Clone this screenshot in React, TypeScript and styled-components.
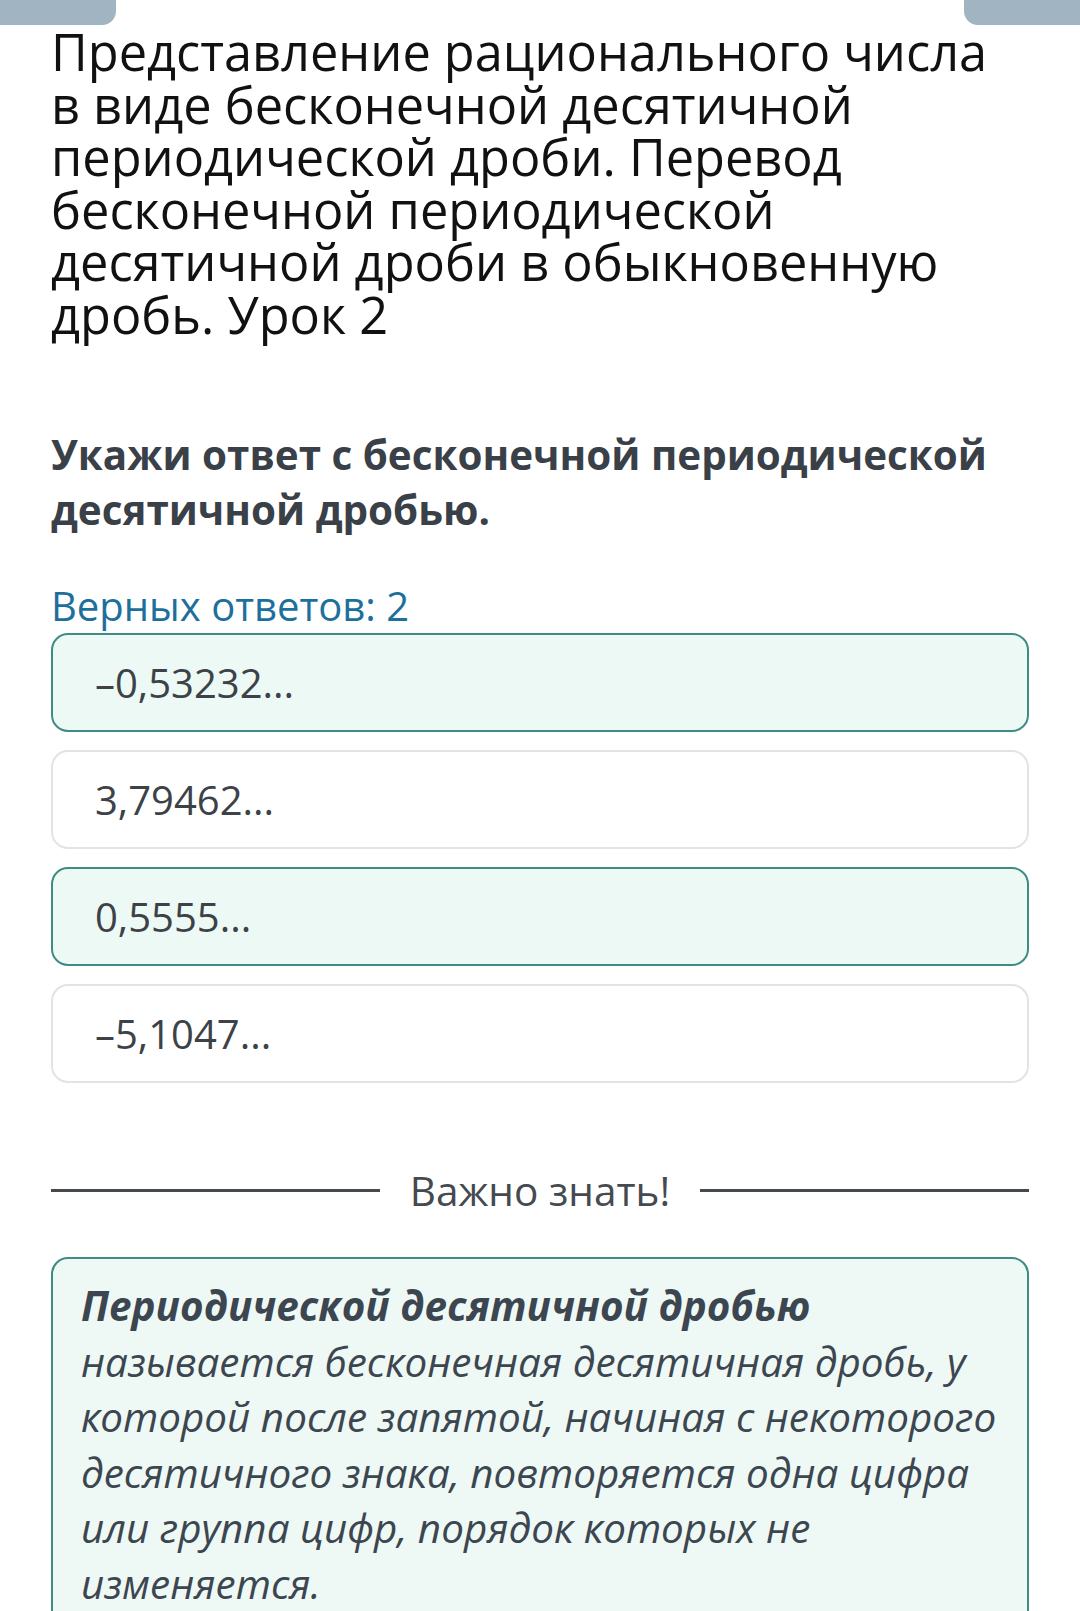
import styled, { createGlobalStyle } from "styled-components";

const GlobalStyle = createGlobalStyle`
  body {
    margin: 0;
    background: #ffffff;
    font-family: "Open Sans", "Noto Sans", sans-serif;
  }
`;

const Page = styled.div`
  width: 1080px;
  height: 1611px;
  overflow: hidden;
  box-sizing: border-box;
`;

const TopBar = styled.div`
  display: flex;
  justify-content: space-between;
  height: 25px;
`;

const Tab = styled.div<{ side: string }>`
  width: 116px;
  height: 25px;
  background: #a0b4c2;
  border-radius: ${(props) =>
    props.side == "left" ? "0 0 14px 0" : "0 0 0 14px"};
`;

const Content = styled.div`
  padding: 0 51px;
`;

const Title = styled.h1`
  margin: 1px 0 0;
  max-width: 960px;
  font-size: 50.5px;
  font-weight: 400;
  line-height: 52.5px;
  color: #111111;
`;

const Question = styled.h2`
  margin: 86px 0 0;
  font-size: 40.4px;
  font-weight: 700;
  line-height: 55px;
  color: #3a4048;
`;

const Hint = styled.div`
  margin-top: 46px;
  font-size: 40px;
  line-height: 46px;
  color: #1d6f9c;
`;

const Options = styled.div`
  display: flex;
  flex-direction: column;
  gap: 18px;
  margin-top: 4px;
`;

const Option = styled.div<{ selected: boolean }>`
  box-sizing: border-box;
  height: 99px;
  display: flex;
  align-items: center;
  padding-left: 42px;
  border-radius: 17px;
  border: 2px solid ${(props) => (props.selected ? "#3d8c85" : "#e3e3e3")};
  background: ${(props) => (props.selected ? "#edf9f4" : "#ffffff")};
  font-size: 40px;
  color: #3c4248;
`;

const Divider = styled.div`
  display: flex;
  align-items: center;
  gap: 30px;
  margin-top: 80px;
  font-size: 40.5px;
  color: #444a50;

  &::before,
  &::after {
    content: "";
    flex: 1;
    height: 3px;
    background: #454a4f;
  }
`;

const InfoBox = styled.div`
  margin-top: 39px;
  box-sizing: border-box;
  min-height: 400px;
  padding: 19px 28px 40px;
  border: 2px solid #3d8c85;
  border-radius: 17px;
  background: #eef8f4;
  font-size: 40.4px;
  line-height: 55.5px;
  font-style: italic;
  color: #3c4650;
`;

const Term = styled.b`
  font-weight: 700;
`;

const answers = [
  { text: "–0,53232...", selected: true },
  { text: "3,79462...", selected: false },
  { text: "0,5555...", selected: true },
  { text: "–5,1047...", selected: false },
];

const App = () => {
  return (
    <>
      <GlobalStyle />
      <Page>
        <TopBar>
          <Tab side="left" />
          <Tab side="right" />
        </TopBar>
        <Content>
          <Title>
            Представление рационального числа в виде бесконечной десятичной
            периодической дроби. Перевод бесконечной периодической десятичной
            дроби в обыкновенную дробь. Урок 2
          </Title>
          <Question>
            Укажи ответ с бесконечной периодической десятичной дробью.
          </Question>
          <Hint>Верных ответов: 2</Hint>
          <Options>
            {answers.map((a) => (
              <Option key={a.text} selected={a.selected}>
                {a.text}
              </Option>
            ))}
          </Options>
          <Divider>Важно знать!</Divider>
          <InfoBox>
            <Term>Периодической десятичной дробью</Term> называется
            бесконечная десятичная дробь, у которой после запятой, начиная с
            некоторого десятичного знака, повторяется одна цифра или группа
            цифр, порядок которых не изменяется.
          </InfoBox>
        </Content>
      </Page>
    </>
  );
};

export default App;
